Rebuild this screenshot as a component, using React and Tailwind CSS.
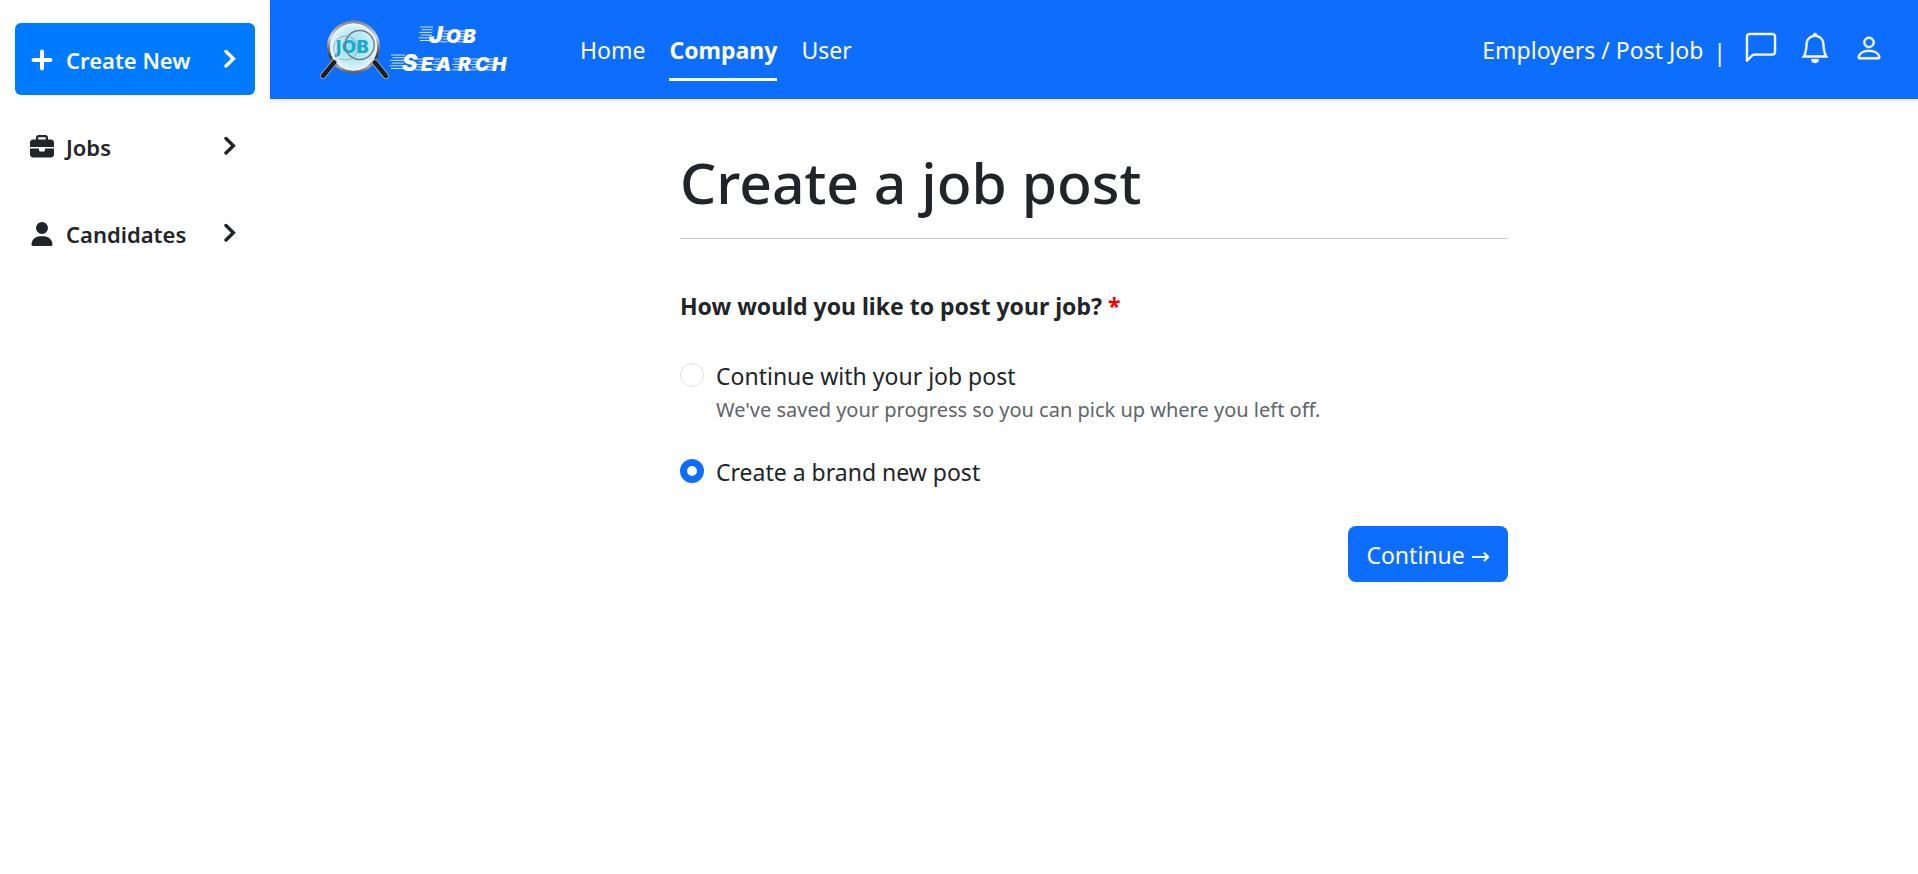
import React, { useState } from "react";
import { FaBriefcase, FaUser } from "react-icons/fa6";
import { BsChatLeft, BsBell, BsPerson } from "react-icons/bs";

function PlusIcon({ className }) {
  return (
    <svg viewBox="0 0 24 24" className={className} fill="none" stroke="currentColor" strokeWidth="4" strokeLinecap="round" aria-hidden="true">
      <path d="M12 3.5v17M3.5 12h17" />
    </svg>
  );
}

function Chevron({ className }) {
  return (
    <svg viewBox="0 0 12 24" className={className} fill="none" stroke="currentColor" strokeWidth="3.4" strokeLinecap="round" aria-hidden="true">
      <path d="M2 3.500l7.400 7.200L2 18" />
    </svg>
  );
}

const jobLetters = [
  [111, 10.5, 6],
  [127, 14.5, 5],
  [144, 14.5, 5],
];
const searchLetters = [
  [83, 38.5, 6],
  [102, 42.5, 5],
  [118, 42.5, 5],
  [138, 42.5, 5],
  [156, 42.5, 5],
  [173, 42.5, 5],
];

function Streaks({ letters, lead }) {
  return letters.flatMap(([x, y, n], k) =>
    Array.from({ length: n }, (_, i) => {
      const len = (k === 0 ? lead : 7) - (i % 2) * 2;
      return <path key={`${k}-${i}`} d={`M${x + 2 - len - i * 0.4} ${y + 0.5 + i * 2.7}h${len}`} />;
    })
  );
}

function Logo() {
  const word = { fontFamily: "Inter, sans-serif", fontWeight: 900, fontStyle: "italic" };
  return (
    <svg viewBox="0 1 192 66" className="h-[66px] w-[192px] shrink-0" role="img" aria-label="Job Search">
      <defs>
        <linearGradient id="ring" x1="0" y1="0" x2="0" y2="1">
          <stop offset="0" stopColor="#85898d" />
          <stop offset=".3" stopColor="#d5d8da" />
          <stop offset=".55" stopColor="#6d7175" />
          <stop offset=".7" stopColor="#3c3f43" />
          <stop offset=".9" stopColor="#a5a8aa" />
          <stop offset="1" stopColor="#606468" />
        </linearGradient>
        <radialGradient id="glass">
          <stop offset="0" stopColor="#8bdcf2" />
          <stop offset=".6" stopColor="#bdeaf7" />
          <stop offset="1" stopColor="#e9f7fb" />
        </radialGradient>
      </defs>
      <circle cx="33.5" cy="31" r="25" fill="url(#glass)" stroke="url(#ring)" strokeWidth="3" />
      <circle cx="33.5" cy="31" r="23" fill="none" stroke="#f4f6f7" strokeWidth="1" />
      <text x="15.5" y="37" fontSize="17" fill="#16aacd" style={{ fontFamily: "DejaVu Sans, sans-serif", fontWeight: 700 }}>JOB</text>
      <circle cx="25.7" cy="32" r="12" fill="none" stroke="#9fa9ae" strokeWidth="1" />
      <circle cx="39.7" cy="29" r="14.5" fill="none" stroke="#727b80" strokeWidth="1.4" />
      <path d="M19 41L12 49M50 41L57 49" stroke="#dfe2e4" strokeWidth="3" />
      <path d="M14 46.500L3 60M55 46.500L66 60" stroke="#b9bdc0" strokeWidth="6" strokeLinecap="round" />
      <path d="M14 46.500L3 60M55 46.500L66 60" stroke="#1c1f22" strokeWidth="4.6" strokeLinecap="round" />
      <g stroke="#fff" strokeWidth="1" opacity=".8">
        <Streaks letters={jobLetters} lead={13} />
        <Streaks letters={searchLetters} lead={14} />
      </g>
      <g fill="#fff" style={word}>
        <text y="27" fontSize="23" x="109 126 143">J<tspan fontSize="19">OB</tspan></text>
        <text y="55" fontSize="23" x="82 101 116 138 155 172">S<tspan fontSize="19">EARCH</tspan></text>
      </g>
    </svg>
  );
}

const sideItems = [
  { label: "Create New", Icon: PlusIcon, primary: true },
  { label: "Jobs", Icon: FaBriefcase },
  { label: "Candidates", Icon: FaUser },
];

export default function App() {
  const [choice, setChoice] = useState("new");
  const radio =
    "mt-[5px] size-6 shrink-0 appearance-none rounded-full border border-[#dee2e6] bg-white checked:border-[7px] checked:border-[#0d6efd]";
  return (
    <div className="flex min-h-screen bg-white font-['Noto_Sans',sans-serif] text-[23px] leading-9 text-[#212529]">
      <aside className="w-[270px] shrink-0 px-[15px] pt-[23px]">
        <nav className="flex flex-col gap-[15px] text-[22px]">
          {sideItems.map(({ label, Icon, primary }) => (
            <a
              key={label}
              href="#"
              className={
                "flex h-[72px] items-center rounded-md px-[15px] pt-0.5 font-semibold " +
                (primary ? "bg-[#007bff] text-white" : "text-[#212529]")
              }
            >
              <Icon className="mr-3 size-6 shrink-0" />
              <span className="grow">{label}</span>
              <Chevron className="mr-1 h-6 w-3" />
            </a>
          ))}
        </nav>
      </aside>
      <div className="grow">
        <header className="flex h-[99px] items-center bg-[#0d6efd] pr-[34px] pl-[50px] text-white shadow-[0_3px_6px_rgba(0,0,0,0.08)]">
          <Logo />
          <nav className="mt-1 ml-[68px] flex grow gap-6">
            <a href="#" className="border-b-3 border-transparent py-2.5">Home</a>
            <a href="#" aria-current="page" className="border-b-3 border-white py-2.5 font-bold">Company</a>
            <a href="#" className="border-b-3 border-transparent py-2.5">User</a>
          </nav>
          <span>Employers / Post Job</span>
          <span className="ml-2.5 pt-1">|</span>
          <div className="ml-5 flex gap-6 pb-1">
            <button type="button" aria-label="Messages"><BsChatLeft strokeWidth="0.25" className="size-[30px] overflow-visible" /></button>
            <button type="button" aria-label="Notifications"><BsBell strokeWidth="0.25" className="size-[30px] overflow-visible" /></button>
            <button type="button" aria-label="Account"><BsPerson strokeWidth="0.25" className="size-[30px] overflow-visible" /></button>
          </div>
        </header>
        <main className="mx-auto max-w-[828px] pt-[47px]">
          <h1 className="border-b border-[#c8c9ca] pb-[20px] text-[57px] leading-[72px] font-medium">Create a job post</h1>
          <form onSubmit={(e) => e.preventDefault()}>
            <fieldset>
              <legend className="pt-[49px] font-bold">
                How would you like to post your job? <span className="text-[#ff0000]">*</span>
              </legend>
              <div className="mt-[34px] flex gap-3">
                <input id="saved" type="radio" name="mode" className={radio} checked={choice === "saved"} onChange={() => setChoice("saved")} />
                <label htmlFor="saved">
                  Continue with your job post
                  <span className="block text-[20px] leading-8 text-[#5f6469]">
                    We've saved your progress so you can pick up where you left off.
                  </span>
                </label>
              </div>
              <div className="mt-7 flex gap-3">
                <input id="new" type="radio" name="mode" className={radio} checked={choice === "new"} onChange={() => setChoice("new")} />
                <label htmlFor="new">Create a brand new post</label>
              </div>
            </fieldset>
            <div className="mt-9 flex justify-end">
              <button type="submit" className="h-14 rounded-lg bg-[#0d6efd] px-[18px] pt-0.5 text-white">
                Continue <span className="font-['DejaVu_Sans',sans-serif] text-[23px]">→</span>
              </button>
            </div>
          </form>
        </main>
      </div>
    </div>
  );
}
